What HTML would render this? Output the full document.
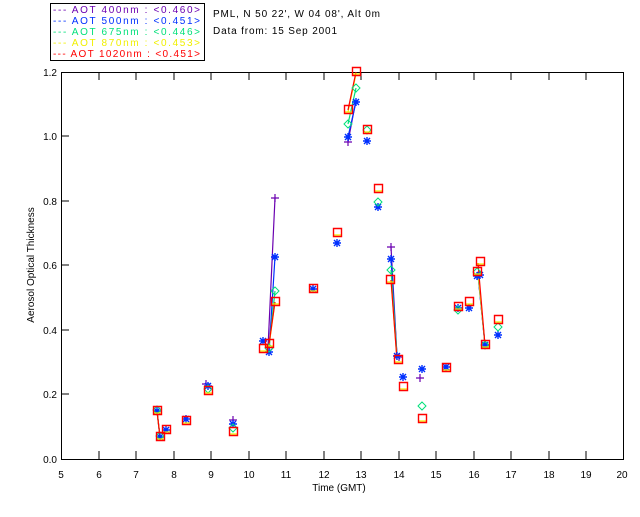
<!DOCTYPE html>
<html><head><style>
body{margin:0;background:#fff;width:640px;height:512px;overflow:hidden}
svg text{font-family:"Liberation Sans",sans-serif;font-size:10px}
</style></head><body>
<svg width="640" height="512" xmlns="http://www.w3.org/2000/svg">
<defs><path id="a" d="M-4 0h8M0 -4v8M-3 -3l6 6M3 -3l-6 6"/></defs>
<rect x="50.5" y="3.5" width="154" height="57" fill="none" stroke="#000"/>
<g font-size="10" xml:space="preserve">
<text x="53" y="13" fill="#6a00b0" textLength="147" lengthAdjust="spacing">---  AOT  400nm : &lt;0.460&gt;</text>
<text x="53" y="24" fill="#0030ff" textLength="147" lengthAdjust="spacing">---  AOT  500nm : &lt;0.451&gt;</text>
<text x="53" y="35" fill="#00e07a" textLength="147" lengthAdjust="spacing">---  AOT  675nm : &lt;0.446&gt;</text>
<text x="53" y="46" fill="#f0f000" textLength="147" lengthAdjust="spacing">---  AOT  870nm : &lt;0.453&gt;</text>
<text x="53" y="57" fill="#ff0000" textLength="147" lengthAdjust="spacing">---  AOT 1020nm : &lt;0.451&gt;</text>
<text x="213" y="17" fill="#000" textLength="167" lengthAdjust="spacing">PML, N 50 22', W 04 08', Alt 0m</text>
<text x="213" y="34" fill="#000" textLength="124" lengthAdjust="spacing">Data from: 15 Sep 2001</text>
</g>
<rect x="61.5" y="72.5" width="562" height="387" fill="none" stroke="#000"/>
<g stroke="#000">
<path d="M99 459v-8M136 459v-8M174 459v-8M211 459v-8M249 459v-8M286 459v-8M324 459v-8M361 459v-8M399 459v-8M436 459v-8M474 459v-8M511 459v-8M549 459v-8M586 459v-8
M99 72v8M136 72v8M174 72v8M211 72v8M249 72v8M286 72v8M324 72v8M361 72v8M399 72v8M436 72v8M474 72v8M511 72v8M549 72v8M586 72v8
M61 394h8M61 330h8M61 265h8M61 201h8M61 136h8"/>
</g>
<g fill="#000" text-anchor="middle">
<text x="61" y="478">5</text><text x="99" y="478">6</text><text x="136" y="478">7</text><text x="174" y="478">8</text><text x="211" y="478">9</text><text x="249" y="478">10</text><text x="286" y="478">11</text><text x="324" y="478">12</text><text x="361" y="478">13</text><text x="399" y="478">14</text><text x="436" y="478">15</text><text x="474" y="478">16</text><text x="511" y="478">17</text><text x="549" y="478">18</text><text x="586" y="478">19</text><text x="622" y="478">20</text>
<text x="339" y="491">Time (GMT)</text>
</g>
<g fill="#000" text-anchor="end">
<text x="57" y="463">0.0</text><text x="57" y="398">0.2</text><text x="57" y="334">0.4</text><text x="57" y="269">0.6</text><text x="57" y="205">0.8</text><text x="57" y="140">1.0</text><text x="57" y="76">1.2</text>
</g>
<text x="34" y="265" text-anchor="middle" transform="rotate(-90 34 265)" fill="#000">Aerosol Optical Thickness</text>
<g fill="none" stroke-width="1.2">
<path stroke="#6a00b0" d="M157 411L160 437M268 348L275 198M348 142L356 100M391 247L397 356M478 275L485 345"/>
<path stroke="#0030ff" d="M157 411L160 437M269 352L275 257M348 137L356 102M391 259L397 356M478 275L485 345"/>
<path stroke="#00e07a" d="M157 411L160 437M269 348L275 291M348 124L356 88M391 270L397 356M478 272L485 345"/>
<path stroke="#f0f000" d="M157 411L160 437M269 346L275 302M348 112L356 74M391 280L397 360M478 272L485 345"/>
<path stroke="#ff0000" d="M157 411L160 437M269 344L275 302M348 110L356 72M391 280L397 360M478 263L485 345"/>
</g>
<g stroke="#6a00b0" stroke-width="1.2">
<path d="M271 198h8M275 194v8M344 142h8M348 138v8M387 247h8M391 243v8M395 357h8M399 353v8M229 420h8M233 416v8M202 384h8M206 380v8M416 378h8M420 374v8"/>
</g>
<g stroke="#0030ff" stroke-width="1.4" fill="none">
<use href="#a" x="157" y="411"/><use href="#a" x="160" y="437"/><use href="#a" x="166" y="430"/><use href="#a" x="186" y="419"/><use href="#a" x="208" y="386"/><use href="#a" x="233" y="424"/><use href="#a" x="263" y="341"/><use href="#a" x="269" y="352"/><use href="#a" x="275" y="257"/><use href="#a" x="313" y="289"/><use href="#a" x="337" y="243"/><use href="#a" x="348" y="137"/><use href="#a" x="356" y="102"/><use href="#a" x="367" y="141"/><use href="#a" x="378" y="207"/><use href="#a" x="391" y="259"/><use href="#a" x="397" y="356"/><use href="#a" x="403" y="377"/><use href="#a" x="422" y="369"/><use href="#a" x="446" y="367"/><use href="#a" x="458" y="308"/><use href="#a" x="469" y="308"/><use href="#a" x="477" y="276"/><use href="#a" x="480" y="275"/><use href="#a" x="485" y="345"/><use href="#a" x="498" y="335"/>
</g>
<g stroke="#00e07a" fill="none" stroke-width="1">
<path d="M157 406l4 4-4 4-4-4zM160 432l4 4-4 4-4-4zM208 385l4 4-4 4-4-4zM233 424l4 4-4 4-4-4zM275 287l4 4-4 4-4-4zM348 120l4 4-4 4-4-4zM356 84l4 4-4 4-4-4zM367 126l4 4-4 4-4-4zM378 198l4 4-4 4-4-4zM391 266l4 4-4 4-4-4zM422 402l4 4-4 4-4-4zM458 306l4 4-4 4-4-4zM477 268l4 4-4 4-4-4zM498 323l4 4-4 4-4-4zM485 341l4 4-4 4-4-4zM269 344l4 4-4 4-4-4z"/>
</g>
<g stroke="#f0f000" fill="none" stroke-width="1.2">
<path d="M154 413h8M157 439h8M163 432h8M183 423h8M205 393h8M230 434h8M260 351h8M266 346h8M272 304h8M310 291h8M334 235h8M345 112h8M353 74h8M364 132h8M375 191h8M387 282h8M395 362h8M400 389h8M419 421h8M443 370h8M455 309h8M466 304h8M474 274h8M477 264h8M482 347h8M495 322h8"/>
</g>
<g stroke="#ff0000" fill="none" stroke-width="1.4">
<path d="M153.5 406.5h8v8h-8zM156.5 432.5h8v8h-8zM162.5 425.5h8v8h-8zM182.5 416.5h8v8h-8zM204.5 386.5h8v8h-8zM229.5 427.5h8v8h-8zM259.5 344.5h8v8h-8zM265.5 339.5h8v8h-8zM271.5 297.5h8v8h-8zM309.5 284.5h8v8h-8zM333.5 228.5h8v8h-8zM344.5 105.5h8v8h-8zM352.5 67.5h8v8h-8zM363.5 125.5h8v8h-8zM374.5 184.5h8v8h-8zM386.5 275.5h8v8h-8zM394.5 355.5h8v8h-8zM399.5 382.5h8v8h-8zM418.5 414.5h8v8h-8zM442.5 363.5h8v8h-8zM454.5 302.5h8v8h-8zM465.5 297.5h8v8h-8zM473.5 267.5h8v8h-8zM476.5 257.5h8v8h-8zM481.5 340.5h8v8h-8zM494.5 315.5h8v8h-8z"/>
</g>
</svg>
</body></html>
